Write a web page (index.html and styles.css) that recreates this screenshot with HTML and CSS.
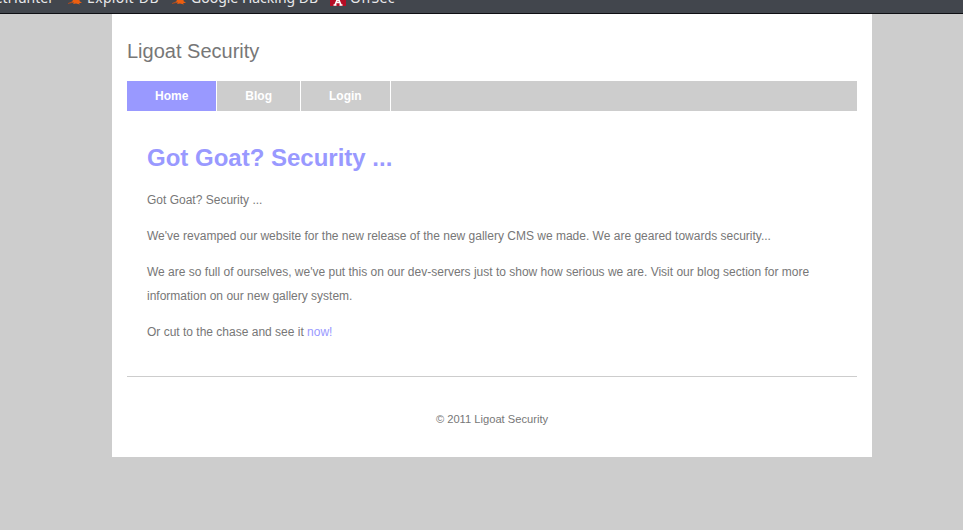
FILE: index.html
```html
<!DOCTYPE html>
<html lang="en">
<head>
<meta charset="utf-8">
<title>Ligoat Security</title>
<link rel="stylesheet" href="styles.css">
</head>
<body>
<div class="bookmarks">
  <div class="bookmark first"><span>Kali NetHunter</span></div>
  <div class="bookmark exploit">
    <svg width="16" height="16" viewBox="0 0 16 16"><path d="M4 7L13 7L12.500 10L15 12H12L13 13.500L9 12.500L6 13L7 11.500L2 12L6 10Z" fill="#ec5e10"/><path d="M1 12.500L5 11.500" stroke="#a84a20" fill="none"/></svg>
    <span>Exploit-DB</span>
  </div>
  <div class="bookmark hacking">
    <svg width="16" height="16" viewBox="0 0 16 16"><path d="M4 7L13 7L12.500 10L15 12H12L13 13.500L9 12.500L6 13L7 11.500L2 12L6 10Z" fill="#ec5e10"/><path d="M1 12.500L5 11.500" stroke="#a84a20" fill="none"/></svg>
    <span>Google Hacking DB</span>
  </div>
  <div class="bookmark offsec">
    <svg width="16" height="16" viewBox="0 0 16 16"><path d="M0 0H16V15H0Z" fill="#b50d25"/><path d="M8 7L5 14M8 7L11 14M3.500 14H6.500M9.500 14H12.500M6 11.500H10" stroke="#fff" stroke-width="1.600" fill="none"/></svg>
    <span>OffSec</span>
  </div>
</div>
<div class="page">
  <header class="site-name">Ligoat Security</header>
  <nav class="menu">
    <a class="active">Home</a>
    <a>Blog</a>
    <a>Login</a>
  </nav>
  <main class="content">
    <h1>Got Goat? Security ...</h1>
    <p>Got Goat? Security ...</p>
    <p>We've revamped our website for the new release of the new gallery CMS we made. We are geared towards security...</p>
    <p>We are so full of ourselves, we've put this on our dev-servers just to show how serious we are. Visit our blog section for more information on our new gallery system.</p>
    <p>Or cut to the chase and see it <a>now!</a></p>
  </main>
  <footer class="footer">© 2011 Ligoat Security</footer>
</div>
</body>
</html>
```
FILE: styles.css
```css
* { box-sizing: border-box; }
body {
  margin: 0;
  background: #cdcdcd;
  color: #777;
  font: 12px/24px "Liberation Sans", Arial, sans-serif;
}
.bookmarks {
  display: flex;
  align-items: flex-end;
  height: 14px;
  padding-bottom: 5px;
  overflow: hidden;
  background: #42464d;
  border-bottom: 1px solid #0e0f13;
  color: #e8e8ea;
  font: 14px/20px "Noto Sans", sans-serif;
  white-space: nowrap;
}
.bookmark { display: flex; flex: none; align-items: center; height: 20px; gap: 4px; }
.first { width: 54px; justify-content: flex-end; }
.exploit { margin-left: 13px; width: 104px; letter-spacing: 0.35px; }
.hacking { width: 159px; }
.offsec { letter-spacing: 0.3px; }
.bookmark svg { flex: none; margin-top: 1px; }
.page {
  width: 760px;
  height: 443px;
  margin-left: 112px;
  padding: 25px 15px 0;
  background: #fff;
}
.site-name { height: 42px; font-size: 20px; }
.menu { display: flex; height: 30px; background: #cdcdcd; }
.menu a {
  padding: 0 28px;
  border-right: 1px solid #fff;
  color: #fff;
  font-weight: bold;
  line-height: 30px;
}
.menu .active { background: #99f; }
.content { height: 265px; padding: 35px 20px 0; }
.content h1 { margin: 0 0 18px; color: #99f; font-size: 24px; line-height: 24px; }
.content p { margin: 0 0 12px; }
.content a { color: #99f; }
.footer {
  padding-top: 30px;
  border-top: 1px solid #cdcdcd;
  font-size: 11.16px;
  text-align: center;
}
```
